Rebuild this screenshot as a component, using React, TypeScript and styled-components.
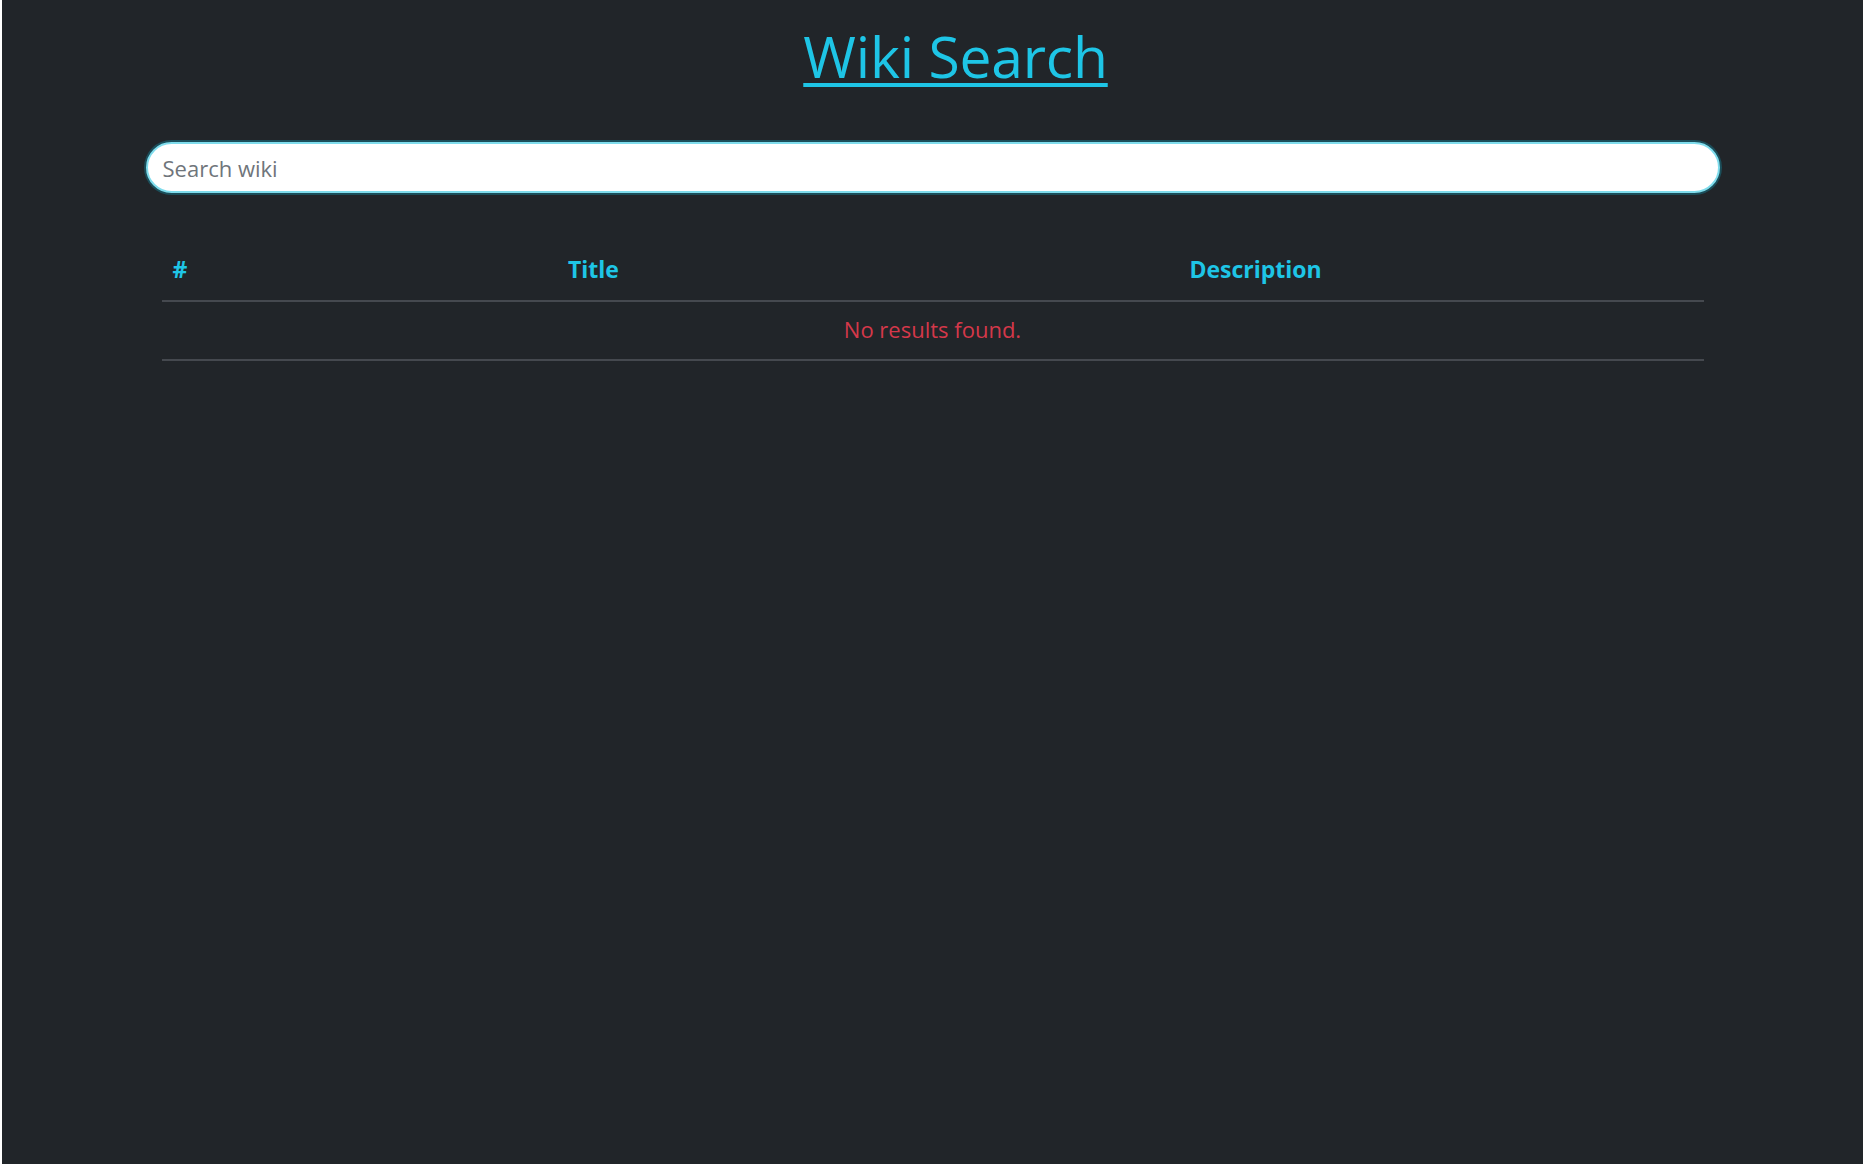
import React from "react";
import styled, { createGlobalStyle } from "styled-components";

const GlobalStyle = createGlobalStyle`
  html, body { margin: 0; padding: 0; background: #ffffff; }
  body { font-family: "Open Sans", "Liberation Sans", Arial, sans-serif; }
  * { box-sizing: border-box; }
`;

const Page = styled.div`
  margin: 0 3px 0 2px;
  min-height: 1164px;
  background: #212529;
  display: flex;
  flex-direction: column;
  align-items: center;
`;

const Heading = styled.h1`
  margin: 22px 0 0 46px;
  font-family: "Open Sans", "Liberation Sans", Arial, sans-serif;
  font-weight: 400;
  font-size: 57px;
  line-height: 68px;
  letter-spacing: -0.2px;
  color: #1ec5e6;
  text-decoration: underline;
  text-decoration-thickness: 4px;
  text-underline-offset: 5px;
`;

const SearchInput = styled.input`
  margin-top: 52px;
  width: 1574px;
  height: 51px;
  border-radius: 26px;
  border: 2px solid #7fdcec;
  box-shadow: 0 0 0 2px rgba(13, 202, 240, 0.25);
  background: #ffffff;
  padding: 0 15px;
  font-family: "Open Sans", "Liberation Sans", Arial, sans-serif;
  font-size: 22px;
  color: #212529;
  outline: none;
  &::placeholder { color: #6f757b; }
`;

const Table = styled.div`
  margin-top: 45px;
  width: 1542px;
  display: flex;
  flex-direction: column;
`;

const HeaderRow = styled.div`
  display: grid;
  grid-template-columns: 218px 428px 1fr;
  align-items: center;
  height: 64px;
  border-bottom: 2px solid #45494f;
`;

const HeadCell = styled.div<{ $align?: string }>`
  padding: 0 11px;
  text-align: ${(p) => p.$align || "center"};
  font-family: "Open Sans", "Liberation Sans", Arial, sans-serif;
  font-weight: 700;
  font-size: 23px;
  color: #1ec5e6;
  white-space: nowrap;
`;

const EmptyRow = styled.div`
  height: 59px;
  display: flex;
  align-items: center;
  justify-content: center;
  padding-bottom: 3px;
  border-bottom: 2px solid #45494f;
  font-family: "Open Sans", "Liberation Sans", Arial, sans-serif;
  font-size: 22px;
  color: #d4384a;
`;

export default function App() {
  return (
    <>
      <GlobalStyle />
      <Page>
        <Heading>Wiki Search</Heading>
        <SearchInput type="text" placeholder="Search wiki" />
        <Table>
          <HeaderRow>
            <HeadCell $align="left">#</HeadCell>
            <HeadCell>Title</HeadCell>
            <HeadCell>Description</HeadCell>
          </HeaderRow>
          <EmptyRow>No results found.</EmptyRow>
        </Table>
      </Page>
    </>
  );
}
